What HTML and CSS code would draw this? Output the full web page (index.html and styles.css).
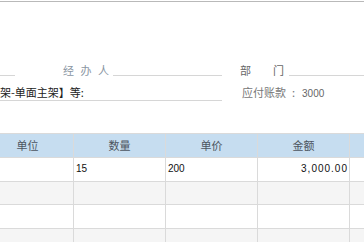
FILE: index.html
```html
<!DOCTYPE html>
<html lang="zh-CN">
<head>
    <meta charset="UTF-8">
    <meta name="viewport" content="width=device-width, initial-scale=1.0">
    <title>采购单</title>
    <link rel="stylesheet" href="styles.css">
</head>
<body>
    <div class="top-line"></div>
    <div class="form">
        <div class="form-row">
            <div class="rule short"></div>
            <div class="label light sp-1"><span>经</span><span>办</span><span>人</span></div>
            <div class="rule mid"></div>
            <div class="label sp-2"><span>部</span><span>门</span></div>
            <div class="rule grow"></div>
        </div>
        <div class="form-row row-2">
            <div class="field">架-单面主架】等:</div>
            <div class="pay">应付账款<span class="colon">:</span><span class="num">3000</span></div>
        </div>
    </div>
    <div class="table-wrap">
        <div class="grid">
            <div class="cell head">单位</div>
            <div class="cell head">数量</div>
            <div class="cell head">单价</div>
            <div class="cell head">金额</div>
            <div class="cell head"></div>

            <div class="cell"></div>
            <div class="cell num">15</div>
            <div class="cell num">200</div>
            <div class="cell num right money">3,000.00</div>
            <div class="cell"></div>

            <div class="cell alt"></div>
            <div class="cell alt"></div>
            <div class="cell alt"></div>
            <div class="cell alt"></div>
            <div class="cell alt"></div>

            <div class="cell"></div>
            <div class="cell"></div>
            <div class="cell"></div>
            <div class="cell"></div>
            <div class="cell"></div>

            <div class="cell alt"></div>
            <div class="cell alt"></div>
            <div class="cell alt"></div>
            <div class="cell alt"></div>
            <div class="cell alt"></div>
        </div>
    </div>
</body>
</html>
```

FILE: styles.css
```css
body {
    margin: 0;
    background: #fff;
    font-family: "Noto Sans CJK SC", "Liberation Sans", sans-serif;
    font-size: 11px;
    color: #333;
    overflow: hidden;
}
.top-line {
    margin-top: 1px;
    height: 1px;
    background: #b9b9b9;
}
.form {
    margin-top: 60px;
}
.form-row {
    display: flex;
    height: 16px;
    line-height: 16px;
}
.row-2 {
    margin-top: 7px;
}
.rule {
    height: 13px;
    border-bottom: 1px solid #d6d6d6;
}
.short {
    width: 15px;
}
.mid {
    width: 109px;
    margin-left: 4px;
}
.grow {
    flex: 1;
    margin-left: 5px;
}
.label {
    display: flex;
    justify-content: space-between;
    color: #666;
}
.light {
    color: #8a96a3;
}
.sp-1 {
    width: 46px;
    margin-left: 48px;
}
.sp-2 {
    width: 44px;
    margin-left: 18px;
}
.field {
    width: 222px;
    height: 15px;
    line-height: 15px;
    border-bottom: 1px solid #d6d6d6;
    color: #222;
    white-space: nowrap;
}
.pay {
    margin-left: 20px;
    color: #777;
    line-height: 15px;
}
.colon {
    margin: 0 7px 0 6px;
}
.num {
    font-family: "Liberation Sans", sans-serif;
    font-size: 10px;
    color: #666;
}
.table-wrap {
    margin-top: 32px;
    overflow: hidden;
}
.grid {
    display: grid;
    grid-template-columns: 74px repeat(3, 92px) 14px;
    grid-template-rows: 24px 24px 23px 24px 24px;
    border-top: 1px solid #dadada;
}
.cell {
    box-sizing: border-box;
    border-right: 1px solid #dadada;
    border-bottom: 1px solid #dadada;
    line-height: 22px;
    padding: 0 2px;
    white-space: nowrap;
    overflow: hidden;
}
.cell:nth-child(5n) {
    border-right: none;
}
.cell.head {
    background: #c6ddf0;
    text-align: center;
    color: #4d5560;
    font-size: 11px;
    padding: 0 0 0 0;
}
.cell.head:first-child {
    text-indent: -18px;
}
.cell.num {
    color: #111;
}
.cell.alt {
    background: #f5f5f5;
}
.right {
    text-align: right;
    padding-right: 1px;
}
.money {
    letter-spacing: 1px;
}
```
